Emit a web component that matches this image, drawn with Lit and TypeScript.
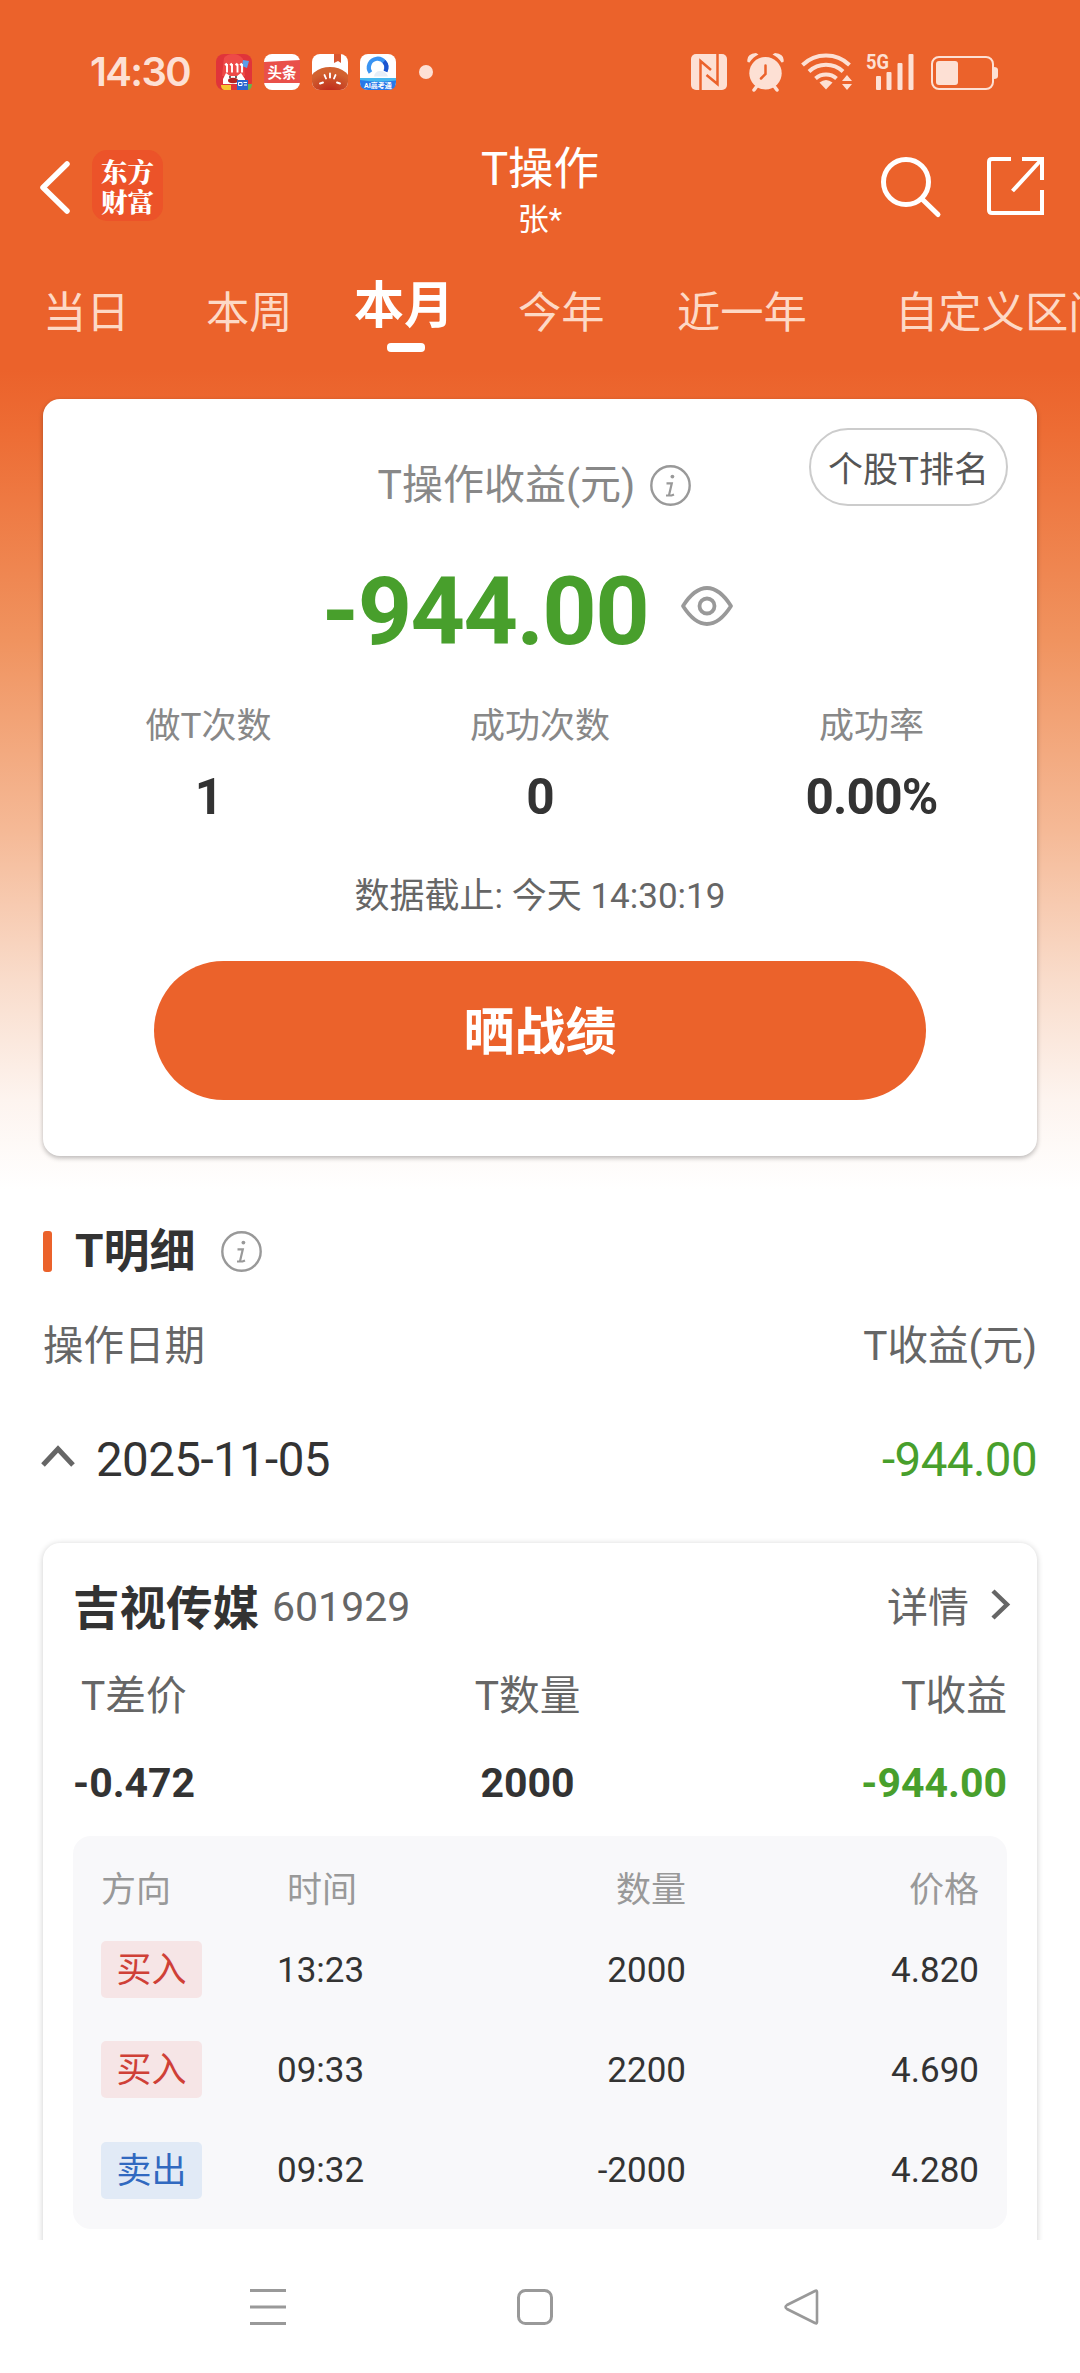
import { LitElement, html, css } from "lit";
import { customElement } from "lit/decorators.js";

const info = html`<svg class="info" viewBox="0 0 41 41" width="41" height="41">
  <circle cx="20.5" cy="20.5" r="19.2" fill="none" stroke="#999" stroke-width="2.4"/>
  <circle cx="22.4" cy="11.6" r="1.9" fill="#999"/>
  <path d="M16.5 18.3h5.3L19 30.300M16 30.500h5.500l2.500-1" fill="none" stroke="#999" stroke-width="2.2"/>
</svg>`;

const trades = [
  { side: "买入", kind: "buy", time: "13:23", qty: "2000", price: "4.820" },
  { side: "买入", kind: "buy", time: "09:33", qty: "2200", price: "4.690" },
  { side: "卖出", kind: "sell", time: "09:32", qty: "-2000", price: "4.280" },
];

@customElement("app-root")
export class AppRoot extends LitElement {
  static styles = css`
    :host { display: block; width: 1080px; height: 2373px; overflow: hidden; background: #fff;
      font-family: Roboto, "Noto Sans CJK SC", sans-serif; color: #333; }
    * { box-sizing: border-box; }
    svg { display: block; flex: none; overflow: visible; }
    .screen { height: 2240px; overflow: hidden;
      background: linear-gradient(#eb622b 0, #eb622b 370px, #ed6c34 430px, #f0935f 640px, #f5b996 830px, #f9dccb 980px, #fdf4ef 1100px, #fff 1190px); }
    .status { height: 144px; padding: 0 82px 0 90px; display: flex; align-items: center; color: #fde0d4; }
    .clock { font: 600 40px/48px Inter, sans-serif; width: 126px; letter-spacing: -1.6px; }
    .apps { display: flex; gap: 12px; }
    .dot { width: 14px; height: 14px; border-radius: 50%; background: #fde0d4; margin-left: 23px; }
    .sys { margin-left: auto; }
    .head { height: 106px; display: grid; grid-template-columns: 40px 52px 1fr 106px 93px; color: #fff; position: relative; }
    .back { grid-column: 2; margin-top: 17px; }
    .logo { width: 71px; height: 71px; margin-top: 6px; border-radius: 15px; background: #ec5329; display: flex; flex-direction: column; align-items: center; justify-content: center;
      font: 900 26.500px/30px "Noto Serif CJK SC", "Noto Sans CJK SC", sans-serif; }
    .title { position: absolute; left: 0; right: 0; top: 2px; text-align: center; }
    .title b { display: block; font-weight: 400; font-size: 45.5px; line-height: 48px; }
    .title i { display: block; font-style: normal; font-size: 31px; line-height: 52px; }
    .tool { margin-top: 13px; }
    .tabs { height: 149px; padding: 34px 0 0 43px; display: flex; white-space: nowrap; font-size: 43.3px; line-height: 59px; color: #fdd9c6; overflow: hidden; }
    .tabs span { flex: none; }
    .t1 { width: 163px; } .t2 { width: 148px; } .t4 { width: 159px; } .t5 { width: 218px; }
    .on { width: 164px; font-size: 50px; font-weight: 700; color: #fff; line-height: 45px; }
    .on::after { content: ""; display: block; width: 38px; height: 9px; border-radius: 4px; background: #fff; margin: 14px 0 0 33px; }
    .card { margin: 0 43px; background: #fff; border-radius: 17px; box-shadow: 0 2px 5px rgba(0,0,0,.28); }
    .sum { height: 757px; padding-top: 29px; display: flex; flex-direction: column; align-items: center; }
    .pill { align-self: flex-end; margin-right: 29px; width: 199px; height: 78px; border: 2px solid #ccc; border-radius: 39px; font-size: 35px; line-height: 81px; text-align: center; color: #555; }
    .cap { display: flex; gap: 15px; align-items: center; height: 60px; margin: -51px 11px 0 0; font-size: 41px; line-height: 60px; color: #888; }
    .money { height: 120px; margin-top: 36px; margin-right: 25px; display: flex; align-items: center; gap: 33px; font-weight: 700; font-size: 95px; letter-spacing: -1.600px; color: #489f2c; }
    .eye { margin-bottom: 10px; }
    .stats { width: 100%; display: grid; grid-template-columns: 331px 332px 331px; text-align: center; margin-top: 30px; font-size: 35px; line-height: 52px; color: #888; }
    .stats b { display: block; font-size: 49.5px; line-height: 60px; margin-top: 14px; letter-spacing: -.8px; color: #333; }
    .asof { font-size: 35px; line-height: 52px; margin-top: 44px; color: #666; }
    .cta { width: 772px; height: 139px; border-radius: 70px; margin-top: 38px; background: #eb622b; color: #fff; font-weight: 700; font-size: 51px; line-height: 143px; text-align: center; }
    .sec { display: flex; align-items: center; height: 60px; margin: 65px 43px 0; font-weight: 700; font-size: 46px; line-height: 60px; }
    .sec::before { content: ""; width: 9px; height: 41px; border-radius: 3px; background: #eb622b; margin-right: 23px; }
    .sec .info { margin-left: 25px; }
    .row { display: flex; justify-content: space-between; align-items: center; }
    .cols { margin: 31px 43px 0; height: 60px; font-size: 40.5px; color: #666; }
    .date { margin: 58px 43px 0 41px; height: 60px; font-size: 47.5px; letter-spacing: -.6px; }
    .date span { display: flex; align-items: center; gap: 21px; }
    .date svg { margin-bottom: 9px; }
    .green { color: #489f2c; }
    .detail { margin-top: 53px; height: 740px; padding: 31px 30px 0; box-shadow: 0 1px 6px rgba(0,0,0,.2); }
    .name { height: 60px; font-size: 41px; color: #666; }
    .name span { display: flex; align-items: center; }
    .name b { font-size: 46.5px; color: #333; margin-right: 13px; }
    .code { line-height: 58px; margin-top: 5px; }
    .name .go { gap: 22px; margin-right: -3px; }
    .nums { display: grid; grid-template-columns: 400px 109px 1fr; font-size: 40.700px; line-height: 60px; margin-top: 32px; color: #666; white-space: nowrap; }
    .nums span:nth-child(3n+2) { text-align: center; }
    .nums span:nth-child(3n) { text-align: right; }
    .first { padding-left: 8px; }
    .vals { font-size: 41px; margin-top: 27px; font-weight: 700; color: #333; }
    .box { background: #f8f8fa; border-radius: 18px; height: 393px; margin-top: 23px; padding: 24px 28px 0 28px; }
    .line { display: grid; grid-template-columns: 101px 238px 246px 1fr; align-items: center; height: 57px; margin-bottom: 43.4px; font-size: 35px; text-align: right; }
    .line span { padding-top: 1px; }
    .line span:nth-child(2) { text-align: left; padding-left: 75px; }
    .line.th { height: 52px; margin-bottom: 29px; color: #999; text-align: right; }
    .line.th span:first-child { text-align: left; }
    .line.th span:nth-child(2) { padding-left: 85px; }
    .line .tag { height: 57px; border-radius: 5px; line-height: 57px; text-align: center; }
    .buy { background: #f6e5e6; color: #cf4037; }
    .sell { background: #e1eaf6; color: #3169c0; }
    .nav { height: 133px; background: #fff; padding: 48px 259px 0 249px; display: flex; justify-content: space-between; }
  `;

  render() {
    return html`
      <div class="screen">
        <div class="status">
          <span class="clock">14:30</span>
          <div class="apps">
            <svg width="36" height="36" viewBox="0 0 36 36"><rect width="36" height="36" rx="8" fill="#e0343a"/><path d="M8 4q3-4 9-4 6 0 10 5l2 17H6z" fill="#ee4a48"/><path d="M27 6l6 1-2 7-5-2z" fill="#5c9eea"/><path d="M11 10v8.500M16 10v8.500M21.500 10v8.500M26 10v8.500M9 11l2-1.500M14 11l2-1.500M19.500 11l2-1.500M24 11l2-1.500" stroke="#fff" stroke-width="1.900"/><path d="M7 25l3-6 4 3h7l4-3 4 6v5H7z" fill="#fff"/><ellipse cx="17" cy="26.500" rx="5" ry="2.800" fill="#b52222"/><circle cx="14" cy="23" r=".9" fill="#222"/><circle cx="20" cy="23" r=".9" fill="#222"/><path d="M5 31h10v5H8q-3-1-3-5z" fill="#f8c530"/><path d="M32 30h4q0 5-4 6z" fill="#67b54c"/><rect x="21" y="26" width="11" height="10" fill="#2b67cf"/><path d="M22.500 28.500h3.500v3h-3.500zM27.500 28.500h3.500M28 31h3" stroke="#fff" fill="none"/></svg>
            <svg width="36" height="36" viewBox="0 0 36 36"><rect width="36" height="36" rx="8" fill="#fff"/><path d="M0 8l36-2v23H0z" fill="#e9504a"/><text x="18" y="23.500" font-size="14.5" font-weight="700" fill="#fff" text-anchor="middle">头条</text></svg>
            <svg width="36" height="36" viewBox="0 0 36 36"><defs><clipPath id="c"><rect width="36" height="36" rx="8"/></clipPath><radialGradient id="g" cx=".5" cy=".75" r=".6"><stop offset="0" stop-color="#bb2018"/><stop offset="1" stop-color="#d2622f"/></radialGradient></defs><g clip-path="url(#c)"><rect width="36" height="36" fill="#fff"/><path d="M22 0h7v9l-3-2-4 2z" fill="#d8562f"/><ellipse cx="18" cy="31" rx="22" ry="18" fill="url(#g)"/><path d="M18 19.500v4M12.500 21l1.500 3.500M23.500 21L22 24.500M8 29.500l3-1M28 29.500l-3-1" stroke="#fff" stroke-width="1.900" stroke-linecap="round"/></g></svg>
            <svg width="36" height="36" viewBox="0 0 36 36"><rect width="36" height="36" rx="8" fill="#fff"/><path d="M0 24h36v4q0 8-8 8H8q-8 0-8-8z" fill="#2878e8"/><path d="M0 24h36v2.500Q18 29 0 26z" fill="#45b7ee"/><path d="M10.500 18.500A8.700 8.700 0 1 1 25.500 17" fill="none" stroke="#3a94f2" stroke-width="4.200"/><path d="M24 7.500q4 4 1.500 10" fill="none" stroke="#1d55cf" stroke-width="4"/><path d="M14 22.500q1-5.500 6-5.500 6 0 8 5.500z" fill="#e6eef8"/><text x="18" y="34" font-size="7" font-weight="700" fill="#fff" text-anchor="middle">AI高考通</text></svg>
          </div>
          <span class="dot"></span>
          <svg class="sys" width="308" height="40" viewBox="690 52 308 40" fill="#fde0d4">
            <rect x="691" y="54" width="36" height="36" rx="5"/>
            <path d="M700.500 90V61l10.500 9M717.500 54v30l-11-9" fill="none" stroke="#eb622b" stroke-width="2.500"/>
            <circle cx="765.500" cy="73.200" r="16.200"/>
            <path d="M747.500 62Q746 54 756 53L758.500 54.500Q753 57 749.500 62.500ZM783.500 62Q785 54 775 53L772.500 54.500Q778 57 781.500 62.500Z"/>
            <path d="M757 86l-3 4M774 86l3 4" stroke="#fde0d4" stroke-width="3.500" stroke-linecap="round"/><path d="M765.500 65.500v8.500l-4.500 4.500" fill="none" stroke="#eb622b" stroke-width="2.500" stroke-linecap="round"/>
            <path d="M802.500 65a34 34 0 0 1 47 0M809 71.500a25 25 0 0 1 34 0M815.500 78.500a16 16 0 0 1 21 0" fill="none" stroke="#fde0d4" stroke-width="4"/><path d="M819.500 82.500q6.500-5 13 0l-6.500 7z"/><path d="M842 81l5-6 5 6zM842 84l5 6 5-6z"/>
            <text x="866" y="69" font-size="21" font-weight="700" textLength="23" lengthAdjust="spacingAndGlyphs">5G</text>
            <rect x="876" y="76" width="5" height="14" rx="1"/><rect x="886.500" y="72" width="5" height="18" rx="1"/><rect x="897.500" y="63" width="5" height="27" rx="1"/><rect x="908.500" y="54" width="5" height="36" rx="1"/>
            <rect x="932" y="57" width="61" height="32" rx="7" fill="none" stroke="#fde0d4" stroke-width="2"/><rect x="936" y="61" width="22" height="24" rx="3"/><path d="M994 67q4 0 4 3v6q0 3-4 3z"/>
          </svg>
        </div>
        <div class="head">
          <svg class="back" width="30" height="53" viewBox="0 0 30 53"><path d="M27 3L3 26.500 27 50" fill="none" stroke="#fff" stroke-width="5.500" stroke-linecap="round" stroke-linejoin="round"/></svg>
          <div class="logo"><span>东方</span><span>财富</span></div>
          <div class="title"><b>T操作</b><i>张*</i></div>
          <svg class="tool" width="60" height="60" viewBox="0 0 60 60" fill="none" stroke="#fff" stroke-width="5"><circle cx="25" cy="25" r="22.500"/><path d="M41 42l16 15.500" stroke-linecap="round"/></svg>
          <svg class="tool" width="58" height="59" viewBox="0 0 58 59" fill="none" stroke="#fff" stroke-width="4"><path d="M24 2H5Q2 2 2 5V53Q2 56 5 56H55V33M35 2H55V23M54.500 2.500L25.500 34"/></svg>
        </div>
        <div class="tabs"><span class="t1">当日</span><span class="t2">本周</span><span class="on">本月</span><span class="t4">今年</span><span class="t5">近一年</span><span>自定义区间</span></div>
        <div class="card sum">
          <div class="pill">个股T排名</div>
          <div class="cap"><span>T操作收益(元)</span>${info}</div>
          <div class="money"><span>-944.00</span><svg class="eye" width="52" height="40" viewBox="0 0 52 40" fill="none" stroke="#999" stroke-width="3.800" stroke-linejoin="round"><path d="M2 20C9 9 17 2 26 2S43 9 50 20C43 31 35 38 26 38S9 31 2 20Z"/><circle cx="26" cy="20" r="7.500"/></svg></div>
          <div class="stats"><span>做T次数<b>1</b></span><span>成功次数<b>0</b></span><span>成功率<b>0.00%</b></span></div>
          <div class="asof">数据截止: 今天 14:30:19</div>
          <div class="cta">晒战绩</div>
        </div>
        <div class="sec">T明细${info}</div>
        <div class="row cols"><span>操作日期</span><span>T收益(元)</span></div>
        <div class="row date"><span><svg width="34" height="22" viewBox="0 0 34 22"><path d="M2 20L17 4l15 16" fill="none" stroke="#666" stroke-width="5"/></svg>2025-11-05</span><span class="green">-944.00</span></div>
        <div class="card detail">
          <div class="row name"><span><b>吉视传媒</b><span class="code">601929</span></span><span class="go">详情<svg width="19" height="31" viewBox="0 0 19 31"><path d="M2 2l14 13.500L2 29" fill="none" stroke="#666" stroke-width="4.500"/></svg></span></div>
          <div class="nums"><span class="first">T差价</span><span>T数量</span><span>T收益</span></div>
          <div class="nums vals"><span>-0.472</span><span>2000</span><span class="green">-944.00</span></div>
          <div class="box">
            <div class="line th"><span>方向</span><span>时间</span><span>数量</span><span>价格</span></div>
            ${trades.map(t => html`<div class="line"><span class="tag ${t.kind}">${t.side}</span><span>${t.time}</span><span>${t.qty}</span><span>${t.price}</span></div>`)}
          </div>
        </div>
      </div>
      <div class="nav">
        <svg width="38" height="38" viewBox="0 0 38 38"><path d="M1 2.500h36M1 19h36M1 35.500h36" stroke="#999" stroke-width="3"/></svg>
        <svg width="38" height="38" viewBox="0 0 38 38"><rect x="2.500" y="2.500" width="33" height="33" rx="7" fill="none" stroke="#999" stroke-width="3"/></svg>
        <svg width="38" height="38" viewBox="0 0 38 38"><path d="M34 4v30q0 2-2 1L4 21q-3-2 0-4L32 3q2-1 2 1z" fill="none" stroke="#999" stroke-width="2.600"/></svg>
      </div>`;
  }
}
